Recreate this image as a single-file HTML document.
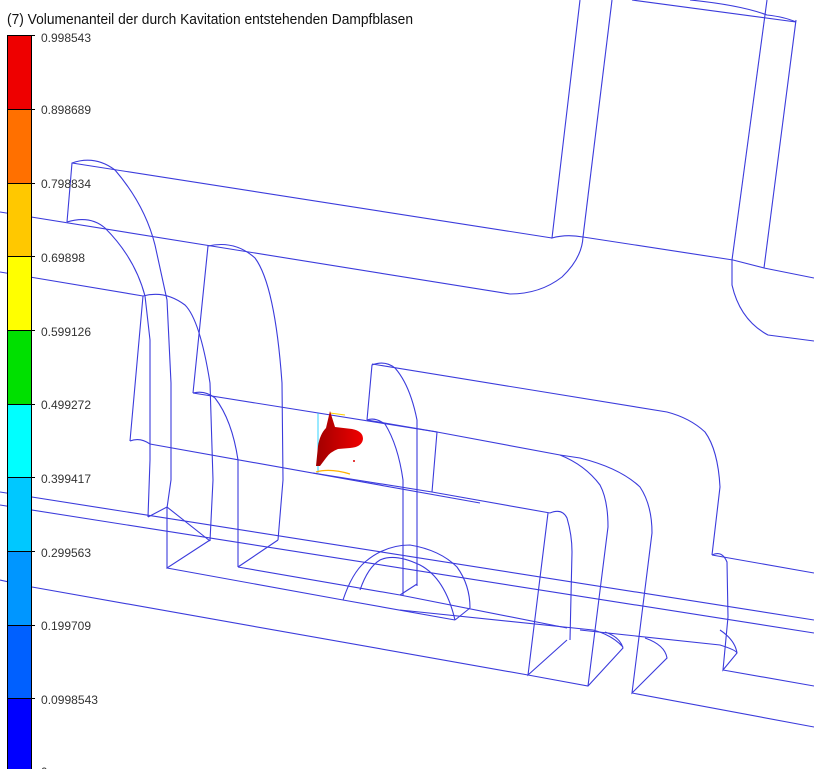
<!DOCTYPE html>
<html><head><meta charset="utf-8"><style>
html,body{margin:0;padding:0;background:#fff;width:814px;height:769px;overflow:hidden}
svg{display:block}
</style></head><body>
<svg width="814" height="769" viewBox="0 0 814 769" xmlns="http://www.w3.org/2000/svg">
<defs>
<linearGradient id="bg" x1="0" x2="1" y1="0" y2="0"><stop offset="0" stop-color="#a00000"/><stop offset="1" stop-color="#f00000"/></linearGradient>
</defs>
<g fill="none" stroke="#3b3bdc" stroke-width="1.1">
<path d="M72,163 L552,238"/>
<path d="M580,0 L552,238 Q566,234 583,237"/>
<path d="M612,0 L583,237"/>
<path d="M0,212 L510,294 Q540,294 562,277 Q582,258 583,237"/>
<path d="M583,237 L733,260 L764,268 L814,278"/>
<path d="M767,0 L732,260"/>
<path d="M796,20 L764,268"/>
<path d="M632,0 L796,22"/>
<path d="M690,0 Q740,5 767,15 Q785,17 796,22"/>
<path d="M732,260 L732,285 Q740,320 768,335 L814,341"/>
<path d="M67,222 L72,163 Q95,155 115,170 Q145,205 155,245 L167,300 L171,383 L171,480 L167,508"/>
<path d="M0,272 L143,296"/>
<path d="M67,222 Q90,215 105,228 Q135,258 145,296 L150,340 L150,460 L148,517"/>
<path d="M130,441 L143,296 Q165,290 185,305 Q200,320 210,383 L213,480 L210,541"/>
<path d="M193,393 L208,246 Q235,240 255,258 Q275,285 282,383 L283,480 L278,540"/>
<path d="M130,441 Q140,437 150,444 L480,503"/>
<path d="M193,393 Q205,390 215,398 Q232,420 238,460 L238,567"/>
<path d="M193,393 L437,432"/>
<path d="M148,517 L167,507 L210,541"/>
<path d="M167,508 L167,568 L210,540"/>
<path d="M167,568 L343,600"/>
<path d="M238,567 L278,540"/>
<path d="M238,567 L400,595"/>
<path d="M0,492 L814,620"/>
<path d="M0,505 L814,633"/>
<path d="M0,580 L32,587 L528,675"/>
<path d="M632,693 L814,727"/>
<path d="M367,420 L372,365 Q385,360 395,368 Q410,385 417,420 L417,586"/>
<path d="M367,420 L437,432 L432,492"/>
<path d="M313,473 L432,492 L550,513"/>
<path d="M367,420 Q375,417 385,424 Q398,445 403,480 L403,596"/>
<path d="M343,600 Q352,573 365,562 Q385,545 410,545 Q440,550 457,567 Q470,585 470,608"/>
<path d="M360,590 Q368,567 380,560 Q395,553 420,565 Q445,578 455,620"/>
<path d="M400,595 L417,584"/>
<path d="M455,620 L470,608"/>
<path d="M343,600 L455,620"/>
<path d="M372,364 L667,412 Q690,418 705,432 Q718,450 720,487 L712,555"/>
<path d="M712,555 Q722,550 727,562 L728,617 L723,670 L737,653 Q735,640 720,630"/>
<path d="M712,555 L814,573"/>
<path d="M723,670 L814,686"/>
<path d="M550,513 Q562,508 567,518 Q572,535 572,552 L570,640"/>
<path d="M548,513 L528,675 L567,640"/>
<path d="M528,675 L588,686 L623,648 Q620,637 605,632"/>
<path d="M437,432 L560,455 Q585,465 600,485 Q608,500 608,527 L588,686"/>
<path d="M560,455 L580,458 Q620,468 640,487 Q652,505 652,533 L632,693 L667,658 Q665,645 645,638"/>
<path d="M400,610 L593,630 Q612,635 623,647"/>
<path d="M400,595 L567,628"/>
<path d="M580,630 L720,645 Q736,650 737,653"/>
</g>
<path d="M318,413 L318,473" stroke="#00c8ff" stroke-width="1" fill="none" opacity="0.8"/>
<path d="M316,472 Q330,468 350,474" stroke="#ffb000" stroke-width="1.2" fill="none"/>
<path d="M330,413 L345,415" stroke="#ffd000" stroke-width="1" fill="none"/>
<path d="M330,411 L335,427 L352,429 Q363,431 363,439 Q362,447 350,448 L338,449 Q330,452 326,458 L320,466 L316,466 L318,446 Q320,434 326,428 Z" fill="url(#bg)"/>
<circle cx="354" cy="461" r="1" fill="#d00"/>
<g stroke="#000" stroke-width="1">
<rect x="7.5" y="35.5" width="24" height="74" fill="#ee0000"/>
<rect x="7.5" y="109.5" width="24" height="74" fill="#ff7000"/>
<rect x="7.5" y="183.5" width="24" height="73" fill="#ffc800"/>
<rect x="7.5" y="256.5" width="24" height="74" fill="#ffff00"/>
<rect x="7.5" y="330.5" width="24" height="74" fill="#00e000"/>
<rect x="7.5" y="404.5" width="24" height="73" fill="#00ffff"/>
<rect x="7.5" y="477.5" width="24" height="74" fill="#00c8ff"/>
<rect x="7.5" y="551.5" width="24" height="74" fill="#0096ff"/>
<rect x="7.5" y="625.5" width="24" height="73" fill="#0060ff"/>
<rect x="7.5" y="698.5" width="24" height="80" fill="#0000ff"/>
<path d="M31,35.5h4M31,109.5h4M31,183.5h4M31,256.5h4M31,330.5h4M31,404.5h4M31,477.5h4M31,551.5h4M31,625.5h4M31,698.5h4"/>
</g>
<g font-family="Liberation Sans, Arial, sans-serif" font-size="11.5" fill="#333">
<text x="41" y="42" textLength="50" lengthAdjust="spacingAndGlyphs">0.998543</text>
<text x="41" y="114" textLength="50" lengthAdjust="spacingAndGlyphs">0.898689</text>
<text x="41" y="188" textLength="50" lengthAdjust="spacingAndGlyphs">0.798834</text>
<text x="41" y="262" textLength="44" lengthAdjust="spacingAndGlyphs">0.69898</text>
<text x="41" y="336" textLength="50" lengthAdjust="spacingAndGlyphs">0.599126</text>
<text x="41" y="409" textLength="50" lengthAdjust="spacingAndGlyphs">0.499272</text>
<text x="41" y="483" textLength="50" lengthAdjust="spacingAndGlyphs">0.399417</text>
<text x="41" y="557" textLength="50" lengthAdjust="spacingAndGlyphs">0.299563</text>
<text x="41" y="630" textLength="50" lengthAdjust="spacingAndGlyphs">0.199709</text>
<text x="41" y="704" textLength="57" lengthAdjust="spacingAndGlyphs">0.0998543</text>
<text x="41" y="776">0</text>
</g>
<text x="7" y="24" font-family="Liberation Sans, Arial, sans-serif" font-size="15" fill="#111" textLength="406" lengthAdjust="spacingAndGlyphs">(7) Volumenanteil der durch Kavitation entstehenden Dampfblasen</text>
</svg>
</body></html>
